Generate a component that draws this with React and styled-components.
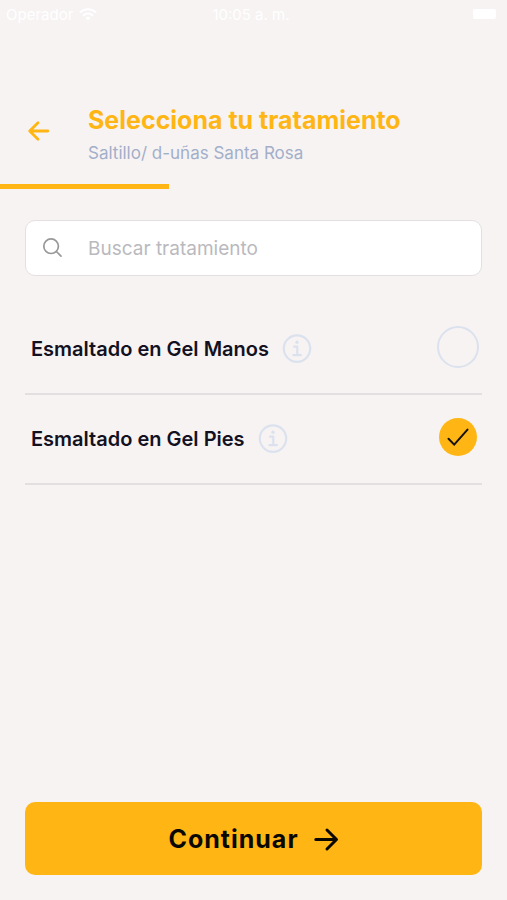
import React, { useState } from 'react'
import styled, { createGlobalStyle } from 'styled-components'

const YELLOW = '#ffb615'
const BACKGROUND = '#f7f3f3'

const GlobalStyle = createGlobalStyle`
  * {
    box-sizing: border-box;
  }
  body {
    margin: 0;
    background: ${BACKGROUND};
    font-family: Inter, 'Open Sans', sans-serif;
  }
  button, input {
    font-family: inherit;
  }
`

const Screen = styled.div`
  display: flex;
  flex-direction: column;
  min-height: 100vh;
  background: ${BACKGROUND};
`

const StatusBar = styled.div`
  display: grid;
  grid-template-columns: 1fr auto 1fr;
  align-items: center;
  height: 28px;
  padding: 0 11px 0 6px;
  color: #fff;
  font-size: 15px;
`

const Carrier = styled.div`
  display: flex;
  align-items: center;
  gap: 6px;
`

const Battery = styled.div`
  justify-self: end;
  width: 23px;
  height: 10px;
  border-radius: 2px;
  background: #fff;
`

const Header = styled.header`
  display: flex;
  align-items: center;
  gap: 36px;
  padding: 70px 24px 20px;
`

const BackButton = styled.button`
  display: flex;
  padding: 0;
  border: none;
  background: none;
  color: ${YELLOW};
  cursor: pointer;
`

const Title = styled.h1`
  margin: 0;
  color: ${YELLOW};
  font-size: 25px;
  line-height: 44px;
  font-weight: 700;
`

const Subtitle = styled.p`
  margin: 0;
  color: #a2afc9;
  font-size: 17px;
  line-height: 22px;
`

const Progress = styled.div`
  height: 5px;
`

const ProgressBar = styled.div`
  height: 100%;
  background: ${YELLOW};
`

const Main = styled.main`
  flex: 1;
  padding: 31px 25px;
`

const SearchBox = styled.label`
  display: flex;
  align-items: center;
  gap: 24px;
  height: 56px;
  padding: 0 16px;
  border: 1px solid #e3e0e2;
  border-radius: 10px;
  background: #fff;
  color: #98989b;
`

const SearchInput = styled.input`
  flex: 1;
  min-width: 0;
  padding: 0;
  border: none;
  outline: none;
  background: none;
  color: #13111f;
  font-size: 19px;
  &::placeholder {
    color: #bab9be;
    opacity: 1;
  }
`

const List = styled.ul`
  margin: 29px 0 0;
  padding: 0;
  list-style: none;
`

const Item = styled.li`
  display: flex;
  align-items: center;
  height: 90px;
  padding: 0 3px 0 6px;
  border-bottom: 2px solid #e3dfe0;
`

const ItemLabel = styled.label`
  color: #13111f;
  font-size: 20px;
  font-weight: 600;
`

const InfoButton = styled.button`
  display: flex;
  margin: 0 auto 0 13px;
  padding: 0;
  border: none;
  background: none;
  color: #dbe2ee;
  cursor: pointer;
`

const Check = styled.span`
  display: grid;
  margin-bottom: 4px;
  & > * {
    grid-area: 1 / 1;
    place-self: center;
  }
  & svg {
    pointer-events: none;
  }
`

const Checkbox = styled.input`
  appearance: none;
  width: 42px;
  height: 42px;
  margin: 0;
  border: 2px solid #dbe2ee;
  border-radius: 50%;
  cursor: pointer;
  &:checked {
    border-color: transparent;
    background: ${YELLOW} padding-box;
  }
`

const Footer = styled.footer`
  padding: 0 25px 25px;
`

const ContinueButton = styled.button`
  display: flex;
  align-items: center;
  justify-content: center;
  gap: 14px;
  width: 100%;
  height: 73px;
  border: none;
  border-radius: 10px;
  background: ${YELLOW};
  color: #0b0802;
  font-size: 25px;
  font-weight: 700;
  letter-spacing: 1px;
  cursor: pointer;
`

const WifiIcon = () => (
  <svg width="18" height="13" viewBox="0 0 18 13" fill="none" stroke="currentColor" strokeWidth="2" aria-hidden="true">
    <path d="M1 4.5a11.5 11.5 0 0 1 16 0M4 7.7a7 7 0 0 1 10 0" />
    <path d="M9 12.5 6.5 10a3.6 3.6 0 0 1 5 0z" fill="currentColor" stroke="none" />
  </svg>
)

const BackIcon = () => (
  <svg width="28" height="28" viewBox="0 0 28 28" fill="none" stroke="currentColor" strokeWidth="2.8" strokeLinecap="round" strokeLinejoin="round" aria-hidden="true">
    <path d="M23.8 14H6M14 5.7 5.7 14l8.3 8.3" />
  </svg>
)

const SearchIcon = () => (
  <svg width="22" height="22" viewBox="0 0 22 22" fill="none" stroke="currentColor" strokeWidth="1.7" strokeLinecap="round" aria-hidden="true">
    <circle cx="9.1" cy="9.2" r="7.3" />
    <path d="m14.4 14.5 4.6 4.6" />
  </svg>
)

const InfoIcon = () => (
  <svg width="30" height="30" viewBox="0 0 30 30" fill="none" stroke="currentColor" strokeWidth="2.2" strokeLinecap="round" strokeLinejoin="round" aria-hidden="true">
    <circle cx="15" cy="14.6" r="13.2" />
    <path d="M12 12.6h3.3v8.5M11.3 21.1h7.6" />
    <circle cx="15" cy="8.2" r="1.7" fill="currentColor" stroke="none" />
  </svg>
)

const CheckIcon = () => (
  <svg width="42" height="42" viewBox="0 0 42 42" fill="none" stroke="#16110a" strokeWidth="2" strokeLinecap="round" strokeLinejoin="miter" aria-hidden="true">
    <path d="m11.5 22.8 5.7 5.8 13.3-15" />
  </svg>
)

const ForwardIcon = () => (
  <svg width="26" height="26" viewBox="0 0 26 26" fill="none" stroke="currentColor" strokeWidth="3" strokeLinecap="round" strokeLinejoin="round" aria-hidden="true">
    <path d="M2.8 13.5h20.6M14 4l9.5 9.5L14 23" />
  </svg>
)

const treatments = [
  { id: 'gel-manos', name: 'Esmaltado en Gel Manos' },
  { id: 'gel-pies', name: 'Esmaltado en Gel Pies' },
]

function App() {
  const [search, setSearch] = useState('')
  const [selected, setSelected] = useState(['gel-pies'])
  const progress = 1 / 3

  const toggle = (id) => {
    setSelected(prev => prev.includes(id) ? prev.filter(x => x !== id) : [...prev, id])
  }

  const visible = treatments.filter(x => x.name.toLowerCase().includes(search.toLowerCase()))

  return (
    <>
      <GlobalStyle />
      <Screen>
        <StatusBar>
          <Carrier>Operador <WifiIcon /></Carrier>
          <span>10:05 a. m.</span>
          <Battery />
        </StatusBar>
        <Header>
          <BackButton type="button" aria-label="Volver"><BackIcon /></BackButton>
          <div>
            <Title>Selecciona tu tratamiento</Title>
            <Subtitle>Saltillo/ d-uñas Santa Rosa</Subtitle>
          </div>
        </Header>
        <Progress>
          <ProgressBar style={{ width: `${progress * 100}%` }} />
        </Progress>
        <Main>
          <SearchBox>
            <SearchIcon />
            <SearchInput
              type="text"
              aria-label="Buscar tratamiento"
              placeholder="Buscar tratamiento"
              value={search}
              onChange={e => setSearch(e.target.value)}
            />
          </SearchBox>
          <List>
            {visible.map(({ id, name }) => (
              <Item key={id}>
                <ItemLabel htmlFor={id}>{name}</ItemLabel>
                <InfoButton type="button" aria-label={`Información de ${name}`}><InfoIcon /></InfoButton>
                <Check>
                  <Checkbox id={id} type="checkbox" checked={selected.includes(id)} onChange={() => toggle(id)} />
                  {selected.includes(id) && <CheckIcon />}
                </Check>
              </Item>
            ))}
          </List>
        </Main>
        <Footer>
          <ContinueButton type="button">Continuar <ForwardIcon /></ContinueButton>
        </Footer>
      </Screen>
    </>
  )
}

export default App
